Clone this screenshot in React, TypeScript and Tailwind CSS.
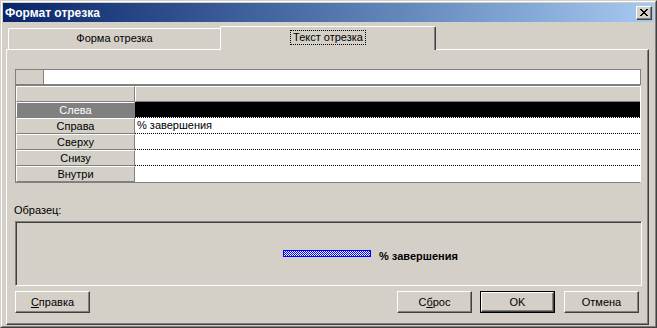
import React from "react";

// Classic Win2000 bevels
const RAISED =
  "border border-t-white border-l-white border-r-[#404040] border-b-[#404040] shadow-[inset_-1px_-1px_0_#808080]";

const ROWS = [
  { label: "Слева", value: "", selected: true },
  { label: "Справа", value: "% завершения", selected: false },
  { label: "Сверху", value: "", selected: false },
  { label: "Снизу", value: "", selected: false },
  { label: "Внутри", value: "", selected: false },
];

function Button({ children, isDefault = false, className = "" }: { children: React.ReactNode; isDefault?: boolean; className?: string }) {
  if (isDefault) {
    return (
      <div className={`w-[75px] h-[22px] border border-black ${className}`}>
        <div className={`h-full flex items-center justify-center ${RAISED}`}>{children}</div>
      </div>
    );
  }
  return (
    <div className={`w-[75px] h-[22px] flex items-center justify-center ${RAISED} ${className}`}>
      {children}
    </div>
  );
}

function TitleBar() {
  return (
    <div className="h-[19px] flex items-center justify-between bg-gradient-to-r from-[#0a246a] to-[#a6caf0] pl-[2px] pr-[2px]">
      <span className="text-white font-bold text-[12px] leading-none">Формат отрезка</span>
      <div className={`w-[16px] h-[14px] bg-[#d4d0c8] flex items-center justify-center ${RAISED}`}>
        <svg width="8" height="7" viewBox="0 0 8 7" shapeRendering="crispEdges">
          <path d="M0 0h2v1H0zM6 0h2v1H6zM1 1h2v1H1zM5 1h2v1H5zM2 2h4v1H2zM3 3h2v1H3zM2 4h4v1H2zM1 5h2v1H1zM5 5h2v1H5zM0 6h2v1H0zM6 6h2v1H6z" fill="#000" />
        </svg>
      </div>
    </div>
  );
}

function Tabs() {
  return (
    <div className="ml-[3px] mt-[4px] h-[23px] flex items-end pl-[2px]">
      {/* inactive tab */}
      <div className="w-[212px] h-[21px] border-t border-l border-white rounded-tl-[2px] flex items-center justify-center pb-[1px]">
        Форма отрезка
      </div>
      {/* active tab — sits over the panel's top edge */}
      <div className="relative z-10 -mb-px w-[216px] h-[24px] bg-[#d4d0c8] border-t border-l border-white border-r border-r-[#404040] shadow-[inset_-1px_0_0_#808080] rounded-tl-[2px] rounded-tr-[2px] flex justify-center pt-[3px]">
        <span className="h-[15px] px-[2px] border border-dotted border-black leading-[13px]">Текст отрезка</span>
      </div>
    </div>
  );
}

function Grid() {
  return (
    <div className="w-[626px] border-t border-l border-b border-[#808080] border-r border-r-white">
      {/* header */}
      <div className="flex h-[16px]">
        <div className="w-[119px] border-t border-l border-white border-b border-r border-b-[#808080] border-r-[#808080]" />
        <div className="flex-1 border-t border-l border-white border-b border-b-[#808080]" />
      </div>
      {ROWS.map((r, i) => (
        <div key={r.label} className="flex h-[16px] bg-white">
          <div
            className={`w-[119px] flex items-center justify-center border-t border-l border-white border-b border-r border-b-[#808080] border-r-[#808080] ${
              r.selected ? "bg-[#808080] text-white" : "bg-[#d4d0c8] text-black"
            }`}
          >
            {r.label}
          </div>
          <div
            className={`flex-1 flex items-center pl-[2px] bg-clip-padding text-black ${
              i < ROWS.length - 1 ? "border-b border-dotted border-black" : ""
            } ${r.selected ? "bg-black" : "bg-white"}`}
          >
            {r.value}
          </div>
        </div>
      ))}
    </div>
  );
}

export default function App() {
  return (
    <div className="w-[657px] h-[328px] bg-[#d4d0c8] border border-t-[#d4d0c8] border-l-[#d4d0c8] border-r-[#404040] border-b-[#404040] font-['Liberation_Sans',sans-serif] text-[11px] text-black leading-[13px]">
      <div className="h-full border border-t-white border-l-white border-r-[#808080] border-b-[#808080] p-px flex flex-col">
        <TitleBar />
        <Tabs />

        {/* tab page */}
        <div className="ml-[3px] w-[643px] h-[276px] border-t border-l border-white border-r border-b border-r-[#404040] border-b-[#404040] shadow-[inset_-1px_-1px_0_#808080] pl-[8px] pt-[19px]">
          {/* edit bar */}
          <div className="w-[626px] h-[16px] flex border border-[#808080]">
            <div className="w-[28px] border-r border-[#808080]" />
            <div className="flex-1 bg-white" />
          </div>

          <Grid />

          <div className="mt-[21px] -ml-px">Образец:</div>

          {/* preview */}
          <div className="mt-[4px] w-[627px] h-[65px] border-t border-l border-[#808080] border-b border-r border-b-white border-r-white shadow-[inset_1px_1px_0_#404040] flex items-start pl-[267px] pt-[28px]">
            <div className="w-[88px] h-[7px] border border-[#0000ff] bg-[repeating-conic-gradient(#0000ff_0_25%,#ffffff_0_50%)] bg-size-[2px_2px]" />
            <span className="ml-[8px] font-bold text-[11px] leading-[13px]">% завершения</span>
          </div>

          {/* buttons */}
          <div className="mt-[5px] w-[624px] flex">
            <Button>
              <span><span className="underline">С</span>правка</span>
            </Button>
            <div className="flex-1" />
            <Button>
              <span>С<span className="underline">б</span>рос</span>
            </Button>
            <Button isDefault className="ml-[8px]">OK</Button>
            <Button className="ml-[9px]">Отмена</Button>
          </div>
        </div>
      </div>
    </div>
  );
}
